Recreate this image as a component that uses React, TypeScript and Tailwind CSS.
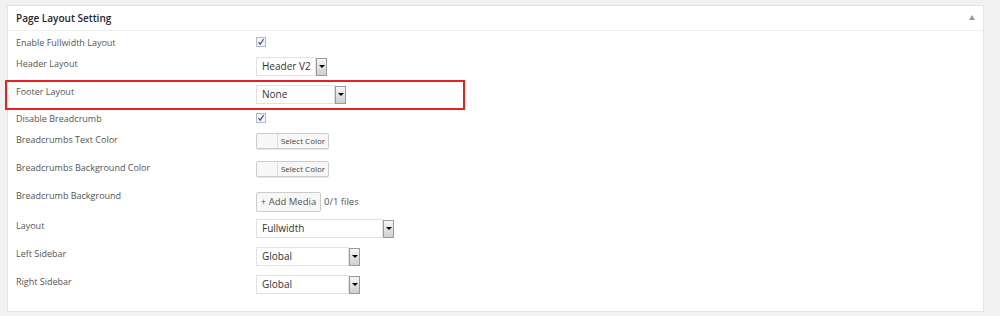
import React from "react";

const font = { fontFamily: '"Open Sans", "Liberation Sans", sans-serif' };

function Checkbox() {
  return (
    <span className="flex h-[10px] w-[10px] items-center justify-center border border-[#b4b9be] bg-[#f4f6fa]">
      <svg width="8" height="8" viewBox="0 0 8 8">
        <path d="M1.5 4.2 L3.2 6.2 L6.6 1.2" fill="none" stroke="#3a4fb0" strokeWidth="1.2" />
      </svg>
    </span>
  );
}

function Select({ value, width }: { value: string; width: string }) {
  return (
    <div className={`flex items-center ${width}`}>
      <div className="flex h-[19px] min-w-0 flex-1 items-center whitespace-nowrap border border-[#e2e2e2] bg-white pl-[5px] text-[10px] text-[#333]">
        {value}
      </div>
      <div className="flex h-[18px] w-[11px] shrink-0 items-center justify-center border border-[#9a9a9a] bg-gradient-to-b from-[#f6f6f6] to-[#cfcfcf]">
        <span className="h-0 w-0 border-x-[3px] border-t-[3px] border-x-transparent border-t-black" />
      </div>
    </div>
  );
}

function ColorButton() {
  return (
    <div className="flex h-[16px] w-[73px] rounded-[2px] border border-[#cccccc] bg-[#f7f7f7] shadow-[0_1px_0_#e5e5e5]">
      <span className="w-[21px] border-r border-[#dddddd] bg-[#f7f7f7]" />
      <span className="flex flex-1 items-center justify-center whitespace-nowrap text-[8px] text-[#444]">Select Color</span>
    </div>
  );
}

function Row({
  label,
  h,
  lt,
  ct,
  children,
}: {
  label: string;
  h: string;
  lt: string;
  ct: string;
  children: React.ReactNode;
}) {
  return (
    <div className={`flex ${h}`}>
      <div className={`w-[248px] whitespace-nowrap pl-[8px] text-[9px] leading-[14px] text-[#555] ${lt}`}>{label}</div>
      <div className={ct}>{children}</div>
    </div>
  );
}

export default function App() {
  return (
    <div className="h-[316px] w-[1000px] bg-[#f1f1f1] pt-[5px] pl-[7px]" style={font}>
      <div className="h-[307px] w-[977px] border border-[#e5e5e5] bg-white">
        <div className="flex h-[25px] items-center justify-between border-b border-[#eeeeee] pl-[8px] pr-[8px]">
          <span className="text-[10px] font-semibold text-[#23282d]">Page Layout Setting</span>
          <span className="mt-[-1px] h-0 w-0 border-x-[3.5px] border-b-[5px] border-x-transparent border-b-[#999]" />
        </div>
        <div className="pt-[2px]">
          <Row label="Enable Fullwidth Layout" h="h-[20px]" lt="pt-[3px]" ct="pt-[4px]">
            <Checkbox />
          </Row>
          <Row label="Header Layout" h="h-[27px]" lt="pt-[4px]" ct="pt-[4px]">
            <Select value="Header V2" width="w-[71px]" />
          </Row>
          <div className="relative">
            <Row label="Footer Layout" h="h-[30px]" lt="pt-[5px]" ct="pt-[5px]">
              <Select value="None" width="w-[90px]" />
            </Row>
            <div className="absolute left-[-3px] top-0 h-[30px] w-[460px] border-2 border-[#e52222]" />
          </div>
          <Row label="Disable Breadcrumb" h="h-[18px]" lt="pt-[2px]" ct="pt-[3px]">
            <Checkbox />
          </Row>
          <Row label="Breadcrumbs Text Color" h="h-[27px]" lt="pt-[5px]" ct="pt-[5px]">
            <ColorButton />
          </Row>
          <Row label="Breadcrumbs Background Color" h="h-[28px]" lt="pt-[6px]" ct="pt-[6px]">
            <ColorButton />
          </Row>
          <Row label="Breadcrumb Background" h="h-[31px]" lt="pt-[6px]" ct="flex items-center gap-[3px] self-start pt-[9px]">
            <div className="flex h-[20px] w-[65px] items-center justify-center rounded-[2px] border border-[#cccccc] bg-[#f7f7f7] text-[9.5px] text-[#555]">
              + Add Media
            </div>
            <span className="text-[9.5px] text-[#555]">0/1 files</span>
          </Row>
          <Row label="Layout" h="h-[28px]" lt="pt-[5px]" ct="pt-[5px]">
            <Select value="Fullwidth" width="w-[138px]" />
          </Row>
          <Row label="Left Sidebar" h="h-[28px]" lt="pt-[5px]" ct="pt-[5px]">
            <Select value="Global" width="w-[104px]" />
          </Row>
          <Row label="Right Sidebar" h="h-[28px]" lt="pt-[5px]" ct="pt-[5px]">
            <Select value="Global" width="w-[104px]" />
          </Row>
        </div>
      </div>
    </div>
  );
}
